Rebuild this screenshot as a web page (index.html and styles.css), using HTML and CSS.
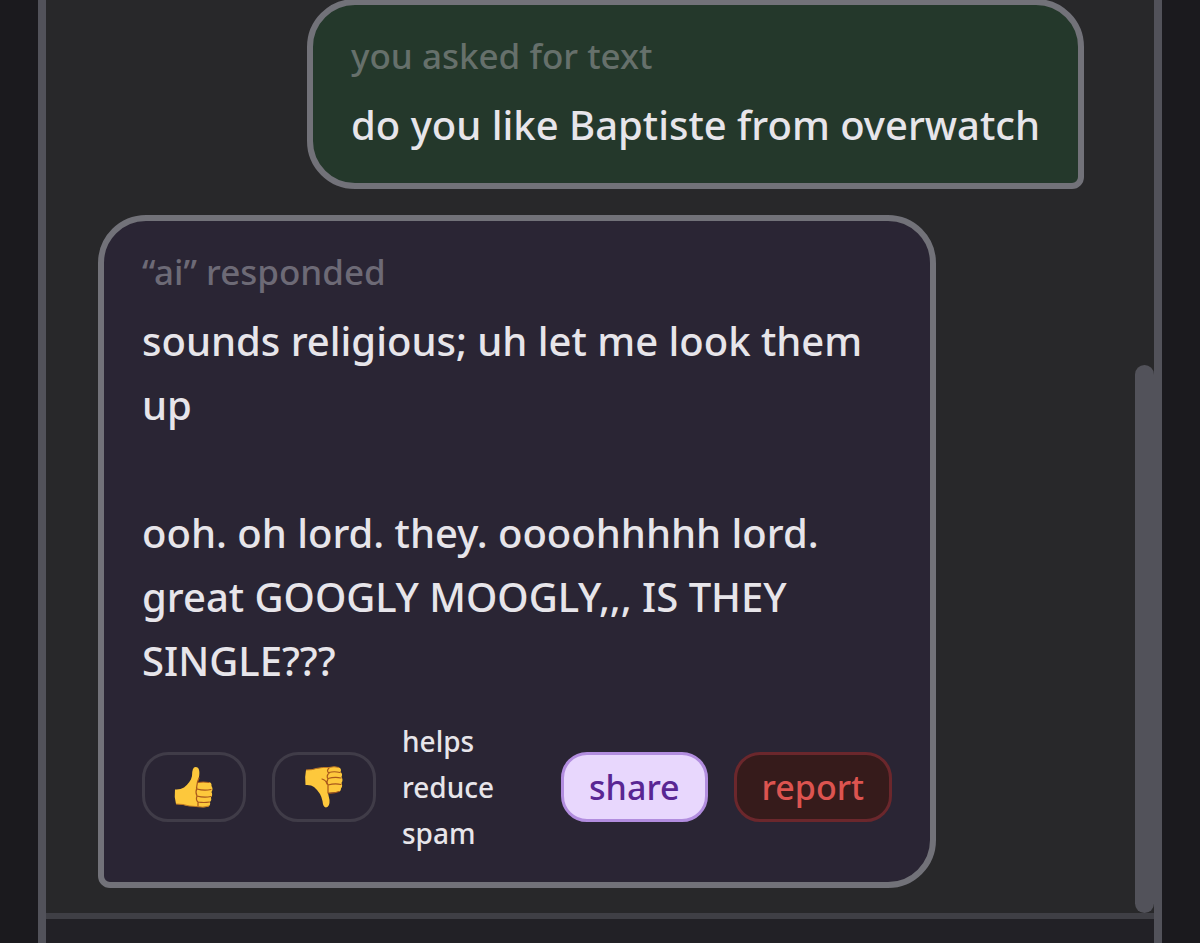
FILE: index.html
```
<!DOCTYPE html>
<html lang="en">
<head>
<meta charset="utf-8">
<title>chat</title>
<meta name="viewport" content="width=device-width, initial-scale=1">
<link rel="stylesheet" href="styles.css">
</head>
<body>
<main class="panel">
  <section class="feed">
    <article class="message message-user">
      <h2 class="label">you asked for text</h2>
      <p class="text">do you like Baptiste from overwatch</p>
    </article>
    <article class="message message-ai">
      <h2 class="label">“ai” responded</h2>
      <p class="text">sounds religious; uh let me look them up

ooh. oh lord. they. oooohhhhh lord. great GOOGLY MOOGLY,,, IS THEY SINGLE???</p>
      <div class="actions">
        <button class="button vote" type="button" aria-label="thumbs up">
          <svg class="thumb" viewBox="0 0 40 42" aria-hidden="true">
            <path fill="#fdc83c" d="M1 23.500Q6 24 10 21.500C14 18 17 15 18 10Q18 1 21.500 1C25.500 1 26 6 25 11L23.500 16H34Q38 16 37.500 20Q39.500 23 37.500 26Q39 29 37 31.500Q38 34 36 36Q37 40 33 41Q26 41.500 20 40Q12 40 9 38.500L2 38Q0 31 1 23.500Z"/>
            <path fill="none" stroke="#a8581c" stroke-width="1.200" stroke-linecap="round" d="M25 12L23.500 16L22.500 22M24 16.500Q29 15.500 35 16.500M23 23Q30 25 37 23.500M23 30Q30 32 37 30.500M24 36Q30 37 35.500 36M23 22Q21 26 23 30Q21.500 34 24 36L24 40"/>
            <path fill="none" stroke="#c17922" stroke-width="1" d="M2 38L9 38.500Q15 40.500 22 40.500Q29 42 35 40"/>
          </svg>
        </button>
        <button class="button vote" type="button" aria-label="thumbs down">
          <svg class="thumb" viewBox="0 0 40 42" aria-hidden="true">
            <path fill="#fdc83c" d="M2 4Q8 4 11 3Q17 1 25 1.500Q31 0 35 1.500Q38 3 36.500 6Q39 8 37.500 11Q39.500 14 37.500 17Q39 20 37 22.500Q37 26 33 26L24 27L25.500 34Q26 41 22 41.500Q19 41 18.500 35Q17 27 10 21Q7 18.500 1.500 19Q0.500 11 2 4Z"/>
            <path fill="none" stroke="#a8581c" stroke-width="1.200" stroke-linecap="round" d="M25 2Q22 5 25 7Q22 10 24 13Q22 16 24 19L24 27Q30 27.500 35 25.500M25 6.500Q30 5 36 6.500M24 12.500Q31 10.500 37 12M24 19Q31 17 37 18.500M18 13Q22 14 23 18"/>
            <path fill="none" stroke="#c17922" stroke-width="1" d="M2 4Q9 4 12 2.500Q19 1 25 1.500Q30 0 35 1.500"/>
          </svg>
        </button>
        <p class="hint">helps reduce spam</p>
        <button class="button share" type="button">share</button>
        <button class="button report" type="button">report</button>
      </div>
    </article>
    <div class="scroll-thumb"></div>
  </section>
  <footer class="composer"></footer>
</main>
</body>
</html>
```
FILE: styles.css
```
* {
  box-sizing: border-box;
}

body {
  margin: 0;
  background: #1b1a1e;
  color: #e7e5ea;
  font-family: "Noto Sans", "Open Sans", sans-serif;
}

.panel {
  display: flex;
  flex-direction: column;
  height: 100vh;
  margin: 0 38px;
  border: solid #52525a;
  border-width: 0 8px;
}

.feed {
  position: relative;
  flex: 1;
  min-height: 0;
  display: flex;
  flex-direction: column;
  justify-content: flex-end;
  gap: 26px;
  padding: 0 70px 25px 52px;
  overflow: hidden;
  background: #28282a;
}

.message {
  flex-shrink: 0;
  max-width: 85%;
  padding: 26px 38px;
  border: 6px solid #727279;
  border-radius: 48px;
}

.message-user {
  align-self: flex-end;
  background: #24382b;
  border-bottom-right-radius: 12px;
}

.message-ai {
  align-self: flex-start;
  background: #2a2534;
  border-bottom-left-radius: 12px;
}

.label {
  margin: 0 0 12px;
  color: #6d6a76;
  font-size: 35px;
  font-weight: 500;
  line-height: 50px;
}

.message-user .label {
  color: #66706b;
}

.text {
  margin: 0;
  font-size: 40px;
  font-weight: 500;
  line-height: 64px;
  white-space: pre-line;
}

.actions {
  display: flex;
  align-items: center;
  gap: 26px;
  margin-top: 25px;
}

.button {
  display: flex;
  align-items: center;
  justify-content: center;
  flex-shrink: 0;
  height: 70px;
  padding: 0 25px;
  border: 3px solid #403c48;
  border-radius: 26px;
  background: transparent;
  font-family: inherit;
  font-size: 34px;
  font-weight: 500;
  line-height: 50px;
}

.vote {
  width: 104px;
}

.thumb {
  width: 40px;
  height: 42px;
}

.hint {
  flex: 1;
  margin: 0;
  font-size: 28px;
  font-weight: 500;
  line-height: 46px;
}

.share {
  min-width: 146px;
  border-color: #b28ddf;
  background: #e8d7fd;
  color: #592693;
}

.report {
  min-width: 158px;
  border-color: #6b272c;
  background: #361b1b;
  color: #dc5450;
}

.scroll-thumb {
  position: absolute;
  right: 0;
  bottom: 0;
  width: 19px;
  height: 60%;
  border-radius: 10px;
  background: #52525a;
}

.composer {
  height: 30px;
  border-top: 6px solid #3f3f45;
  background: #222126;
}
```
